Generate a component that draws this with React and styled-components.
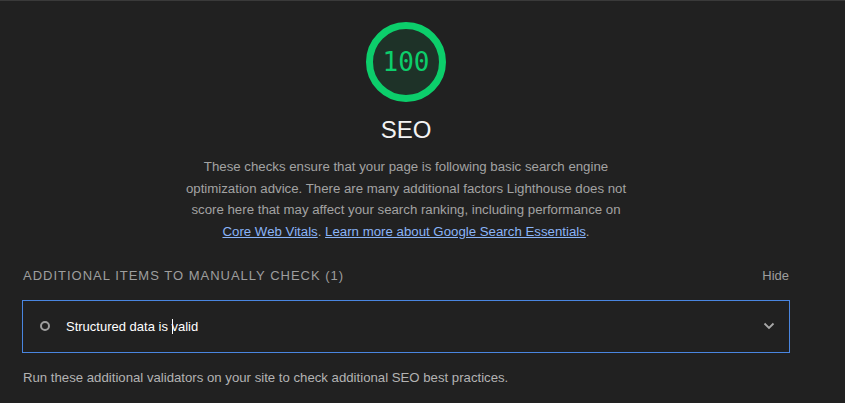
import styled, { createGlobalStyle } from "styled-components";

const Global = createGlobalStyle`
  html, body {
    margin: 0;
    background: #212121;
  }
  body {
    font-family: "Liberation Sans", Arial, sans-serif;
    overflow: hidden;
  }
`;

const Page = styled.div`
  height: 403px;
  box-sizing: border-box;
  border-top: 1px solid #3a3a3a;
  padding: 21px 55px 0 22px;
`;

const Header = styled.div`
  display: flex;
  flex-direction: column;
  align-items: center;
`;

const Gauge = styled.div`
  width: 80px;
  height: 80px;
  box-sizing: border-box;
  border: 7px solid #0cce6b;
  border-radius: 50%;
  background: rgba(12, 206, 107, 0.1);
  display: flex;
  align-items: center;
  justify-content: center;
  color: #0cce6b;
  font-family: "DejaVu Sans Mono", "Liberation Mono", monospace;
  font-size: 26px;
`;

const Title = styled.div`
  margin-top: 14px;
  font-size: 24px;
  color: #f3f3f3;
`;

const Description = styled.p`
  margin: 12px 0 0;
  max-width: 450px;
  text-align: center;
  font-size: 13.25px;
  line-height: 21.7px;
  color: #a3a3a3;
`;

const Link = styled.a`
  color: #8ab4f8;
  text-decoration: underline;
`;

const GroupHeader = styled.div`
  margin-top: 25px;
  display: flex;
  justify-content: space-between;
  align-items: center;
  font-size: 13px;
  color: #9e9e9e;
`;

const GroupTitle = styled.span`
  margin-left: 1px;
  text-transform: uppercase;
  letter-spacing: 1px;
`;

const Toggle = styled.span`
  margin-right: 1px;
`;

const Audit = styled.div`
  margin-top: 17px;
  height: 53px;
  box-sizing: border-box;
  border: 1px solid #4a86e0;
  display: flex;
  align-items: center;
  padding: 0 14px 0 17px;
`;

const Ring = styled.span`
  width: 10px;
  height: 10px;
  box-sizing: border-box;
  border: 2px solid #9e9e9e;
  border-radius: 50%;
`;

const AuditTitle = styled.span`
  margin-left: 16px;
  flex: 1;
  font-size: 13px;
  color: #ffffff;
`;

const Caret = styled.span`
  display: inline-block;
  width: 1px;
  height: 15px;
  margin-right: -1px;
  background: #ffffff;
  vertical-align: -3px;
`;

const Footer = styled.p`
  margin: 17px 0 0 1px;
  font-size: 13.2px;
  color: #b3b3b3;
`;

function Chevron() {
  return (
    <svg width="12" height="8" viewBox="0 0 12 8">
      <polyline points="1.5,1.5 6,6 10.5,1.5" fill="none" stroke="#a8a8a8" strokeWidth="1.8" />
    </svg>
  );
}

export default function App() {
  return (
    <>
      <Global />
      <Page>
        <Header>
          <Gauge>100</Gauge>
          <Title>SEO</Title>
          <Description>
            These checks ensure that your page is following basic search engine optimization advice. There are
            many additional factors Lighthouse does not score here that may affect your search ranking, including
            performance on <Link>Core Web Vitals</Link>. <Link>Learn more about Google Search Essentials</Link>.
          </Description>
        </Header>
        <GroupHeader>
          <GroupTitle>Additional items to manually check (1)</GroupTitle>
          <Toggle>Hide</Toggle>
        </GroupHeader>
        <Audit>
          <Ring />
          <AuditTitle>
            Structured data is <Caret />valid
          </AuditTitle>
          <Chevron />
        </Audit>
        <Footer>Run these additional validators on your site to check additional SEO best practices.</Footer>
      </Page>
    </>
  );
}
